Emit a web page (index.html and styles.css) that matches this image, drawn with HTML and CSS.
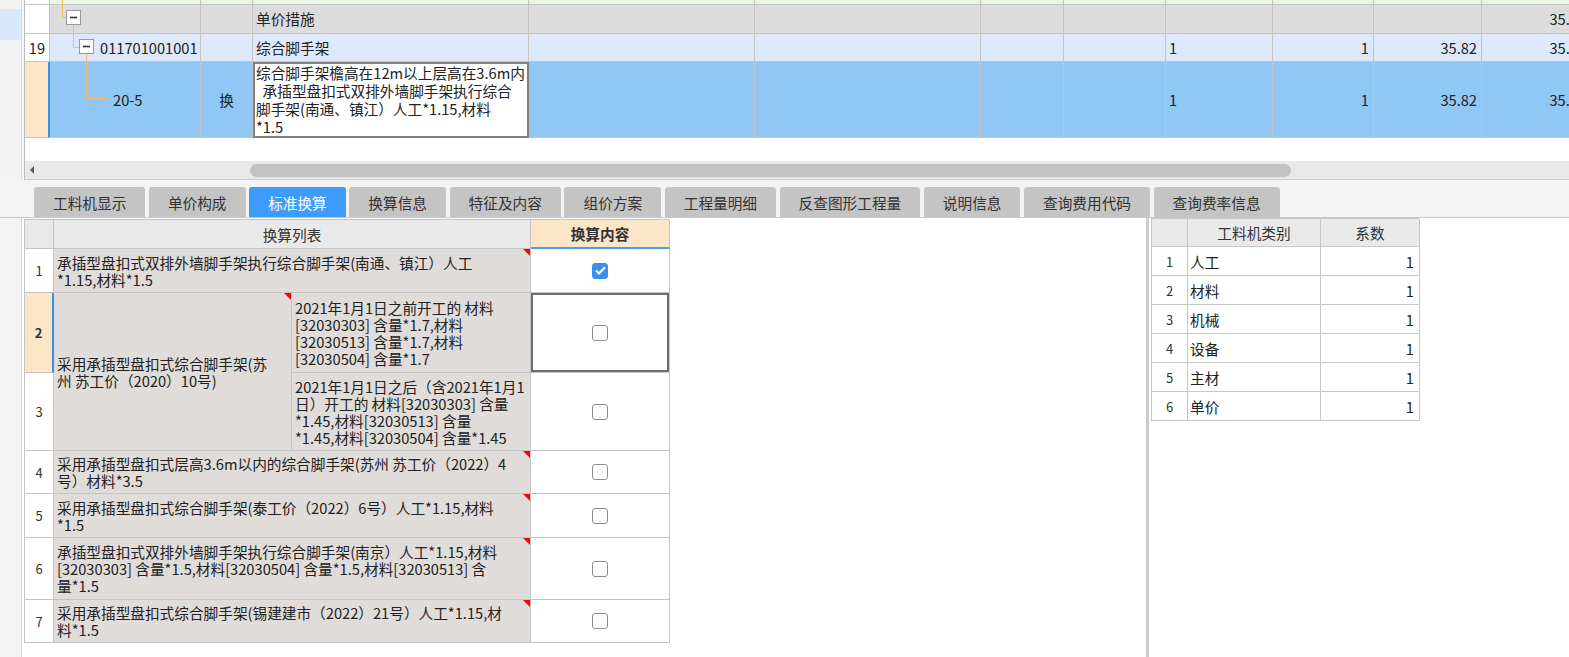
FILE: index.html
```html
<!DOCTYPE html>
<html lang="zh-CN">
<head>
<meta charset="utf-8">
<title>标准换算</title>
<link rel="stylesheet" href="styles.css">
</head>
<body>
<div class="top">
  <div class="side"><div class="side-sel"></div></div>
  <div class="main">
    <div class="grid-wrap">
      <div class="grid">
        <div class="c rn"></div><div class="c g0"></div><div class="c g0"></div><div class="c g0"></div><div class="c g0"></div><div class="c g0"></div><div class="c g0"></div><div class="c g0"></div><div class="c g0"></div><div class="c g0"></div><div class="c g0"></div><div class="c g0"></div>

        <div class="c rn"></div><div class="c g1"></div><div class="c g1"></div><div class="c g1">单价措施</div><div class="c g1"></div><div class="c g1"></div><div class="c g1"></div><div class="c g1"></div><div class="c g1"></div><div class="c g1"></div><div class="c g1"></div><div class="c g1 r">35.82</div>

        <div class="c rn">19</div><div class="c g2 code1">011701001001</div><div class="c g2"></div><div class="c g2">综合脚手架</div><div class="c g2"></div><div class="c g2"></div><div class="c g2"></div><div class="c g2"></div><div class="c g2">1</div><div class="c g2 r">1</div><div class="c g2 r">35.82</div><div class="c g2 r">35.82</div>

        <div class="c rn sel-rn"></div><div class="c g3 code2">20-5</div><div class="c g3 ctr">换</div><div class="c edit">综合脚手架檐高在12m以上层高在3.6m内<br>  承插型盘扣式双排外墙脚手架执行综合<br>脚手架(南通、镇江）人工*1.15,材料<br>*1.5</div><div class="c g3"></div><div class="c g3"></div><div class="c g3"></div><div class="c g3"></div><div class="c g3">1</div><div class="c g3 r">1</div><div class="c g3 r">35.82</div><div class="c g3 r">35.82</div>
      </div>
      <svg class="tree" width="100" height="110" viewBox="0 0 100 110">
        <g stroke="#f3bb6c" stroke-width="1" fill="none">
          <path d="M37.5 0V17.5H41"/>
          <path d="M48.5 25V47.5H54"/>
          <path d="M61.5 54V98.5H83"/>
        </g>
        <rect x="41.5" y="10.5" width="14" height="14" fill="#fff" stroke="#9a9a9a"/>
        <path d="M45 17.5H52" stroke="#333" stroke-width="1.6"/>
        <rect x="54.5" y="39.5" width="14" height="14" fill="#fff" stroke="#9a9a9a"/>
        <path d="M58 46.5H65" stroke="#333" stroke-width="1.6"/>
      </svg>
    </div>
    <div class="hscroll"><span class="arrow"></span><span class="thumb"></span></div>
  </div>
</div>

<div class="tabs">
  <div class="tab">工料机显示</div>
  <div class="tab">单价构成</div>
  <div class="tab active">标准换算</div>
  <div class="tab">换算信息</div>
  <div class="tab">特征及内容</div>
  <div class="tab">组价方案</div>
  <div class="tab">工程量明细</div>
  <div class="tab">反查图形工程量</div>
  <div class="tab">说明信息</div>
  <div class="tab">查询费用代码</div>
  <div class="tab">查询费率信息</div>
</div>

<div class="bottom">
  <div class="side2"></div>
  <div class="left-panel">
    <div class="hs">
      <div class="h hn"></div>
      <div class="h span2">换算列表</div>
      <div class="h hc">换算内容</div>

      <div class="n">1</div>
      <div class="t span2 mark">承插型盘扣式双排外墙脚手架执行综合脚手架(南通、镇江）人工<br>*1.15,材料*1.5</div>
      <div class="k"><span class="cb on"><svg width="11" height="9" viewBox="0 0 11 9"><path d="M1 4.5L4 7.5L10 1.2" stroke="#fff" stroke-width="2" fill="none"/></svg></span></div>

      <div class="n sel-n">2</div>
      <div class="t merged mark">采用承插型盘扣式综合脚手架(苏<br>州 苏工价（2020）10号)</div>
      <div class="t">2021年1月1日之前开工的 材料<br>[32030303] 含量*1.7,材料<br>[32030513] 含量*1.7,材料<br>[32030504] 含量*1.7</div>
      <div class="k focus"><span class="cb"></span></div>

      <div class="n">3</div>
      <div class="t">2021年1月1日之后（含2021年1月1<br>日）开工的 材料[32030303] 含量<br>*1.45,材料[32030513] 含量<br>*1.45,材料[32030504] 含量*1.45</div>
      <div class="k"><span class="cb"></span></div>

      <div class="n">4</div>
      <div class="t span2 mark">采用承插型盘扣式层高3.6m以内的综合脚手架(苏州 苏工价（2022）4<br>号）材料*3.5</div>
      <div class="k"><span class="cb"></span></div>

      <div class="n">5</div>
      <div class="t span2 mark">采用承插型盘扣式综合脚手架(泰工价（2022）6号）人工*1.15,材料<br>*1.5</div>
      <div class="k"><span class="cb"></span></div>

      <div class="n">6</div>
      <div class="t span2 mark">承插型盘扣式双排外墙脚手架执行综合脚手架(南京）人工*1.15,材料<br>[32030303] 含量*1.5,材料[32030504] 含量*1.5,材料[32030513] 含<br>量*1.5</div>
      <div class="k"><span class="cb"></span></div>

      <div class="n">7</div>
      <div class="t span2 mark">采用承插型盘扣式综合脚手架(锡建建市（2022）21号）人工*1.15,材<br>料*1.5</div>
      <div class="k"><span class="cb"></span></div>
    </div>
  </div>
  <div class="splitter"></div>
  <div class="right-panel">
    <div class="coef">
      <div class="h"></div><div class="h">工料机类别</div><div class="h">系数</div>
      <div class="q qn">1</div><div class="q">人工</div><div class="q qr">1</div>
      <div class="q qn">2</div><div class="q">材料</div><div class="q qr">1</div>
      <div class="q qn">3</div><div class="q">机械</div><div class="q qr">1</div>
      <div class="q qn">4</div><div class="q">设备</div><div class="q qr">1</div>
      <div class="q qn">5</div><div class="q">主材</div><div class="q qr">1</div>
      <div class="q qn">6</div><div class="q">单价</div><div class="q qr">1</div>
    </div>
  </div>
</div>
</body>
</html>
```

FILE: styles.css
```css
* { box-sizing: border-box; }
html, body { margin: 0; padding: 0; }
body {
  width: 1569px;
  height: 657px;
  overflow: hidden;
  background: #fff;
  font-family: "Noto Sans CJK SC", "Noto Sans", sans-serif;
  font-size: 14.67px;
  color: #222;
}

/* ---------- top grid ---------- */
.top {
  display: flex;
  height: 180px;
  background: #f7f7f7;
}
.side {
  width: 22px;
  background: #f2f2f2;
  border-right: 1px solid #d8d8d8;
  padding-top: 9px;
}
.side-sel {
  height: 31px;
  background: #dae8fb;
}
.main {
  flex: 1;
  min-width: 0;
  margin-left: 2px;
  border-left: 1px solid #bcbcbc;
  display: flex;
  flex-direction: column;
  background: #fff;
}
.grid-wrap {
  position: relative;
  flex: 1;
  overflow: hidden;
}
.grid {
  display: grid;
  grid-template-columns: 25px 151px 52px 276px 226px 226px 83px 102px 107px 101px 108px 109px;
  grid-template-rows: 5px 29px 28px 76px;
  width: 1566px;
}
.c {
  border-right: 1px solid #c4c4c4;
  border-bottom: 1px solid #c4c4c4;
  display: flex;
  align-items: center;
  padding: 0 3px;
  white-space: nowrap;
  overflow: hidden;
  line-height: 18px;
}
.c.r { justify-content: flex-end; padding-right: 4px; }
.c.ctr { justify-content: center; }
.rn { background: #fff; justify-content: center; }
.g0 { background: #ebf5e3; }
.g1 { background: #dcdcdc; }
.g2 { background: #dde9fb; }
.g3 { background: #91c7f5; }
.code1 { padding-left: 50px; }
.code2 { padding-left: 63px; }
.sel-rn {
  background: #fde5c8;
  border-right: 2px solid #3a8ee6;
}
.edit {
  background: #fff;
  border: 2px solid #7f7f7f;
  align-items: flex-start;
  white-space: pre;
  padding: 0 0 0 1px;
  display: block;
}
.tree {
  position: absolute;
  left: 0;
  top: 0;
  pointer-events: none;
}
.hscroll {
  height: 19px;
  background: #e8e8e8;
  border-bottom: 1px solid #cdcdcd;
  display: flex;
  align-items: center;
  padding-left: 5px;
}
.arrow {
  width: 0;
  height: 0;
  border-top: 4px solid transparent;
  border-bottom: 4px solid transparent;
  border-right: 4px solid #5a5a5a;
}
.thumb {
  margin-left: 216px;
  width: 1041px;
  height: 13px;
  border-radius: 7px;
  background: #c2c2c2;
}

/* ---------- tabs ---------- */
.tabs {
  height: 38px;
  background: #f3f3f3;
  border-bottom: 1px solid #c8c8c8;
  display: flex;
  align-items: flex-end;
  gap: 3.6px;
  padding-left: 34px;
}
.tab {
  height: 30px;
  padding: 0 19px;
  background: #c4c4c4;
  color: #333;
  border-radius: 3px 3px 0 0;
  display: flex;
  align-items: center;
  white-space: nowrap;
}
.tab.active {
  background: #3d9bfd;
  color: #fff;
}

/* ---------- bottom ---------- */
.bottom {
  display: flex;
  height: 439px;
}
.side2 {
  width: 22px;
  background: #f3f3f3;
  border-right: 1px solid #d4d4d4;
}
.left-panel {
  width: 1124px;
  background: #fff;
  padding: 1px 0 0 2px;
}
.splitter {
  width: 3px;
  background: #cdcdcd;
}
.right-panel {
  flex: 1;
  background: #fff;
  padding-left: 2px;
}

.hs {
  display: grid;
  grid-template-columns: 29px 238px 239px 139px;
  grid-template-rows: 29px 44px 80px 78px 43px 44px 62px 43px;
  width: 645px;
  border-left: 1px solid #c4c4c4;
  border-top: 1px solid #c4c4c4;
}
.hs > div {
  border-right: 1px solid #c4c4c4;
  border-bottom: 1px solid #c4c4c4;
  display: flex;
  align-items: center;
  position: relative;
  line-height: 17px;
  white-space: nowrap;
}
.h {
  background: #e9e9e9;
  justify-content: center;
  color: #333;
}
.hs .hc {
  background: #fde5c8;
  font-weight: bold;
  border-bottom: 2px solid #4a9bf5;
}
.span2 { grid-column: span 2; }
.n {
  justify-content: center;
  background: #fff;
  font-size: 13px;
  color: #333;
}
.hs .sel-n {
  background: #fde5c8;
  font-weight: bold;
  border-right: 2px solid #3a8ee6;
}
.t {
  background: #e0dcd9;
  padding: 0 3px;
  overflow: hidden;
}
.merged { grid-row: span 2; }
.mark::after {
  content: "";
  position: absolute;
  top: 0;
  right: 0;
  width: 0;
  height: 0;
  border-top: 7px solid #f00;
  border-left: 7px solid transparent;
}
.k {
  justify-content: center;
  background: #fff;
}
.focus { box-shadow: inset 0 0 0 2px #6e6e6e; }
.cb {
  width: 16px;
  height: 16px;
  border: 1px solid #8c8c8c;
  border-radius: 3px;
  background: #fff;
  display: flex;
  align-items: center;
  justify-content: center;
}
.cb.on {
  background: #3d8ef3;
  border-color: #3d8ef3;
}

.coef {
  display: grid;
  grid-template-columns: 36px 133px 99px;
  grid-template-rows: 28px repeat(6, 29px);
  width: 268px;
  border-left: 1px solid #c8c8c8;
  border-top: 1px solid #c8c8c8;
}
.coef > div {
  border-right: 1px solid #c8c8c8;
  border-bottom: 1px solid #c8c8c8;
  display: flex;
  align-items: center;
  white-space: nowrap;
}
.q { padding-left: 2px; }
.qn { justify-content: center; font-size: 13px; color: #333; padding-left: 0; }
.qr { justify-content: flex-end; padding-right: 5px; }
```
